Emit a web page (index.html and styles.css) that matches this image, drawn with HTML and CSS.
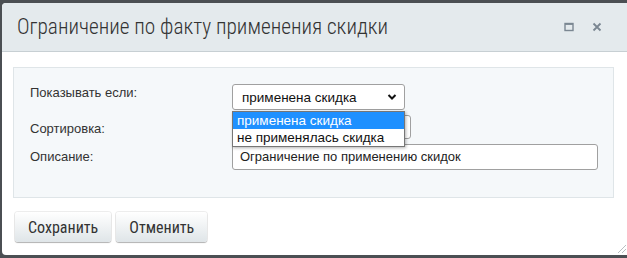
FILE: index.html
```html
<!DOCTYPE html>
<html lang="ru">
<head>
    <meta charset="UTF-8">
    <title>Ограничение по факту применения скидки</title>
    <link rel="stylesheet" href="styles.css">
</head>
<body>
    <div class="dialog">
        <div class="dialog-head">
            <span class="dialog-title">Ограничение по факту применения скидки</span>
            <div class="dialog-icons">
                <svg width="10" height="10" viewBox="0 0 10 10"><rect x="1" y="1.5" width="8" height="7" fill="none" stroke="#7b8792" stroke-width="1.4"/><line x1="1" y1="2.2" x2="9" y2="2.2" stroke="#7b8792" stroke-width="1.4"/></svg>
                <svg width="10" height="10" viewBox="0 0 10 10"><path d="M1.5 1.5 L8.5 8.5 M8.5 1.5 L1.5 8.5" stroke="#7b8792" stroke-width="1.8"/></svg>
            </div>
        </div>
        <div class="dialog-body">
            <div class="panel">
                <div class="row">
                    <label class="label">Показывать если:</label>
                    <div class="select-wrap">
                        <div class="select">
                            <span>применена скидка</span>
                            <svg width="10" height="8" viewBox="0 0 10 8"><path d="M1.5 2 L5 5.5 L8.5 2" fill="none" stroke="#111" stroke-width="2"/></svg>
                        </div>
                        <ul class="options">
                            <li class="option active">применена скидка</li>
                            <li class="option">не применялась скидка</li>
                        </ul>
                    </div>
                </div>
                <div class="row">
                    <label class="label">Сортировка:</label>
                    <div class="input short"></div>
                </div>
                <div class="row">
                    <label class="label">Описание:</label>
                    <div class="input wide">Ограничение по применению скидок</div>
                </div>
            </div>
            <div class="buttons">
                <button class="btn">Сохранить</button>
                <button class="btn">Отменить</button>
            </div>
        </div>
        <div class="grip"></div>
    </div>
</body>
</html>
```

FILE: styles.css
```css
body {
    margin: 0;
    padding: 3px 0 0 2px;
    background-color: #4b4f53;
    font-family: Arial, "Liberation Sans", sans-serif;
    overflow: hidden;
    height: 258px;
    box-sizing: border-box;
}

.dialog {
    position: relative;
    width: 630px;
    height: 252px;
    background-color: #fff;
    border-radius: 4px 0 0 4px;
}

.dialog-head {
    height: 48px;
    background-color: #e4eaed;
    border-bottom: 1px solid #c7cfd3;
    border-radius: 4px 0 0 0;
    display: flex;
    align-items: center;
    padding-left: 15px;
}

.dialog-title {
    font-family: "Roboto Condensed", "Liberation Sans", Arial, sans-serif;
    font-weight: 300;
    font-size: 21.3px;
    color: #333;
    margin-top: -1px;
}

.dialog-icons {
    margin-left: auto;
    margin-right: 30px;
    display: flex;
    gap: 18px;
    align-items: center;
}

.dialog-body {
    padding: 15px 0 0 11px;
}

.panel {
    width: 601px;
    background-color: #f5f8fa;
    border: 1px solid #dfe5e8;
    padding: 16px 0 0 16px;
    box-sizing: border-box;
    height: 131px;
    font-size: 13px;
    color: #333;
}

.row {
    display: flex;
    align-items: flex-start;
}

.label {
    width: 202px;
    padding-top: 1px;
}

.select-wrap {
    position: relative;
}

.select {
    width: 173px;
    height: 26px;
    box-sizing: border-box;
    border: 1px solid #a0a0a0;
    border-radius: 3px;
    background: #fff;
    display: flex;
    align-items: center;
    padding: 0 7px 0 9px;
    font-size: 13.5px;
    color: #111;
    justify-content: space-between;
}

.options {
    position: absolute;
    top: 27px;
    left: 0;
    width: 173px;
    margin: 0;
    padding: 0;
    list-style: none;
    background: #fff;
    border: 1px solid #767676;
    box-sizing: border-box;
    box-shadow: 1px 1px 3px rgba(0, 0, 0, 0.3);
    z-index: 2;
    font-size: 13.5px;
    color: #111;
}

.option {
    height: 17px;
    line-height: 17px;
    padding-left: 4px;
}

.option.active {
    background-color: #1e90ff;
    color: #fff;
}

.row + .row {
    margin-top: 5px;
}

.input {
    height: 24px;
    box-sizing: border-box;
    border: 1px solid #a0a0a0;
    border-radius: 3px;
    background: #fff;
}

.short {
    width: 179px;
}

.wide {
    width: 366px;
    height: 26px;
    line-height: 24px;
    padding-left: 7px;
    font-size: 13px;
    color: #222;
}

.row:nth-child(2) .label {
    padding-top: 6px;
}

.row:nth-child(3) .label {
    padding-top: 5px;
}

.buttons {
    display: flex;
    gap: 5px;
    margin: 14px 0 0 2px;
}

.btn {
    height: 30px;
    padding: 0 13px;
    border: none;
    border-radius: 3px;
    background: linear-gradient(#ffffff, #dfe5e8);
    box-shadow: 0 1px 1px rgba(0, 0, 0, 0.25), 0 0 0 1px rgba(0, 0, 0, 0.07);
    font-family: "Roboto Condensed", "Liberation Sans", Arial, sans-serif;
    font-size: 16px;
    color: #333;
}

.grip {
    position: absolute;
    right: 6px;
    bottom: 2px;
    width: 10px;
    height: 10px;
    background: repeating-linear-gradient(135deg, transparent 0 2px, #b8bec2 2px 3px);
    clip-path: polygon(100% 0, 100% 100%, 0 100%);
}
```
